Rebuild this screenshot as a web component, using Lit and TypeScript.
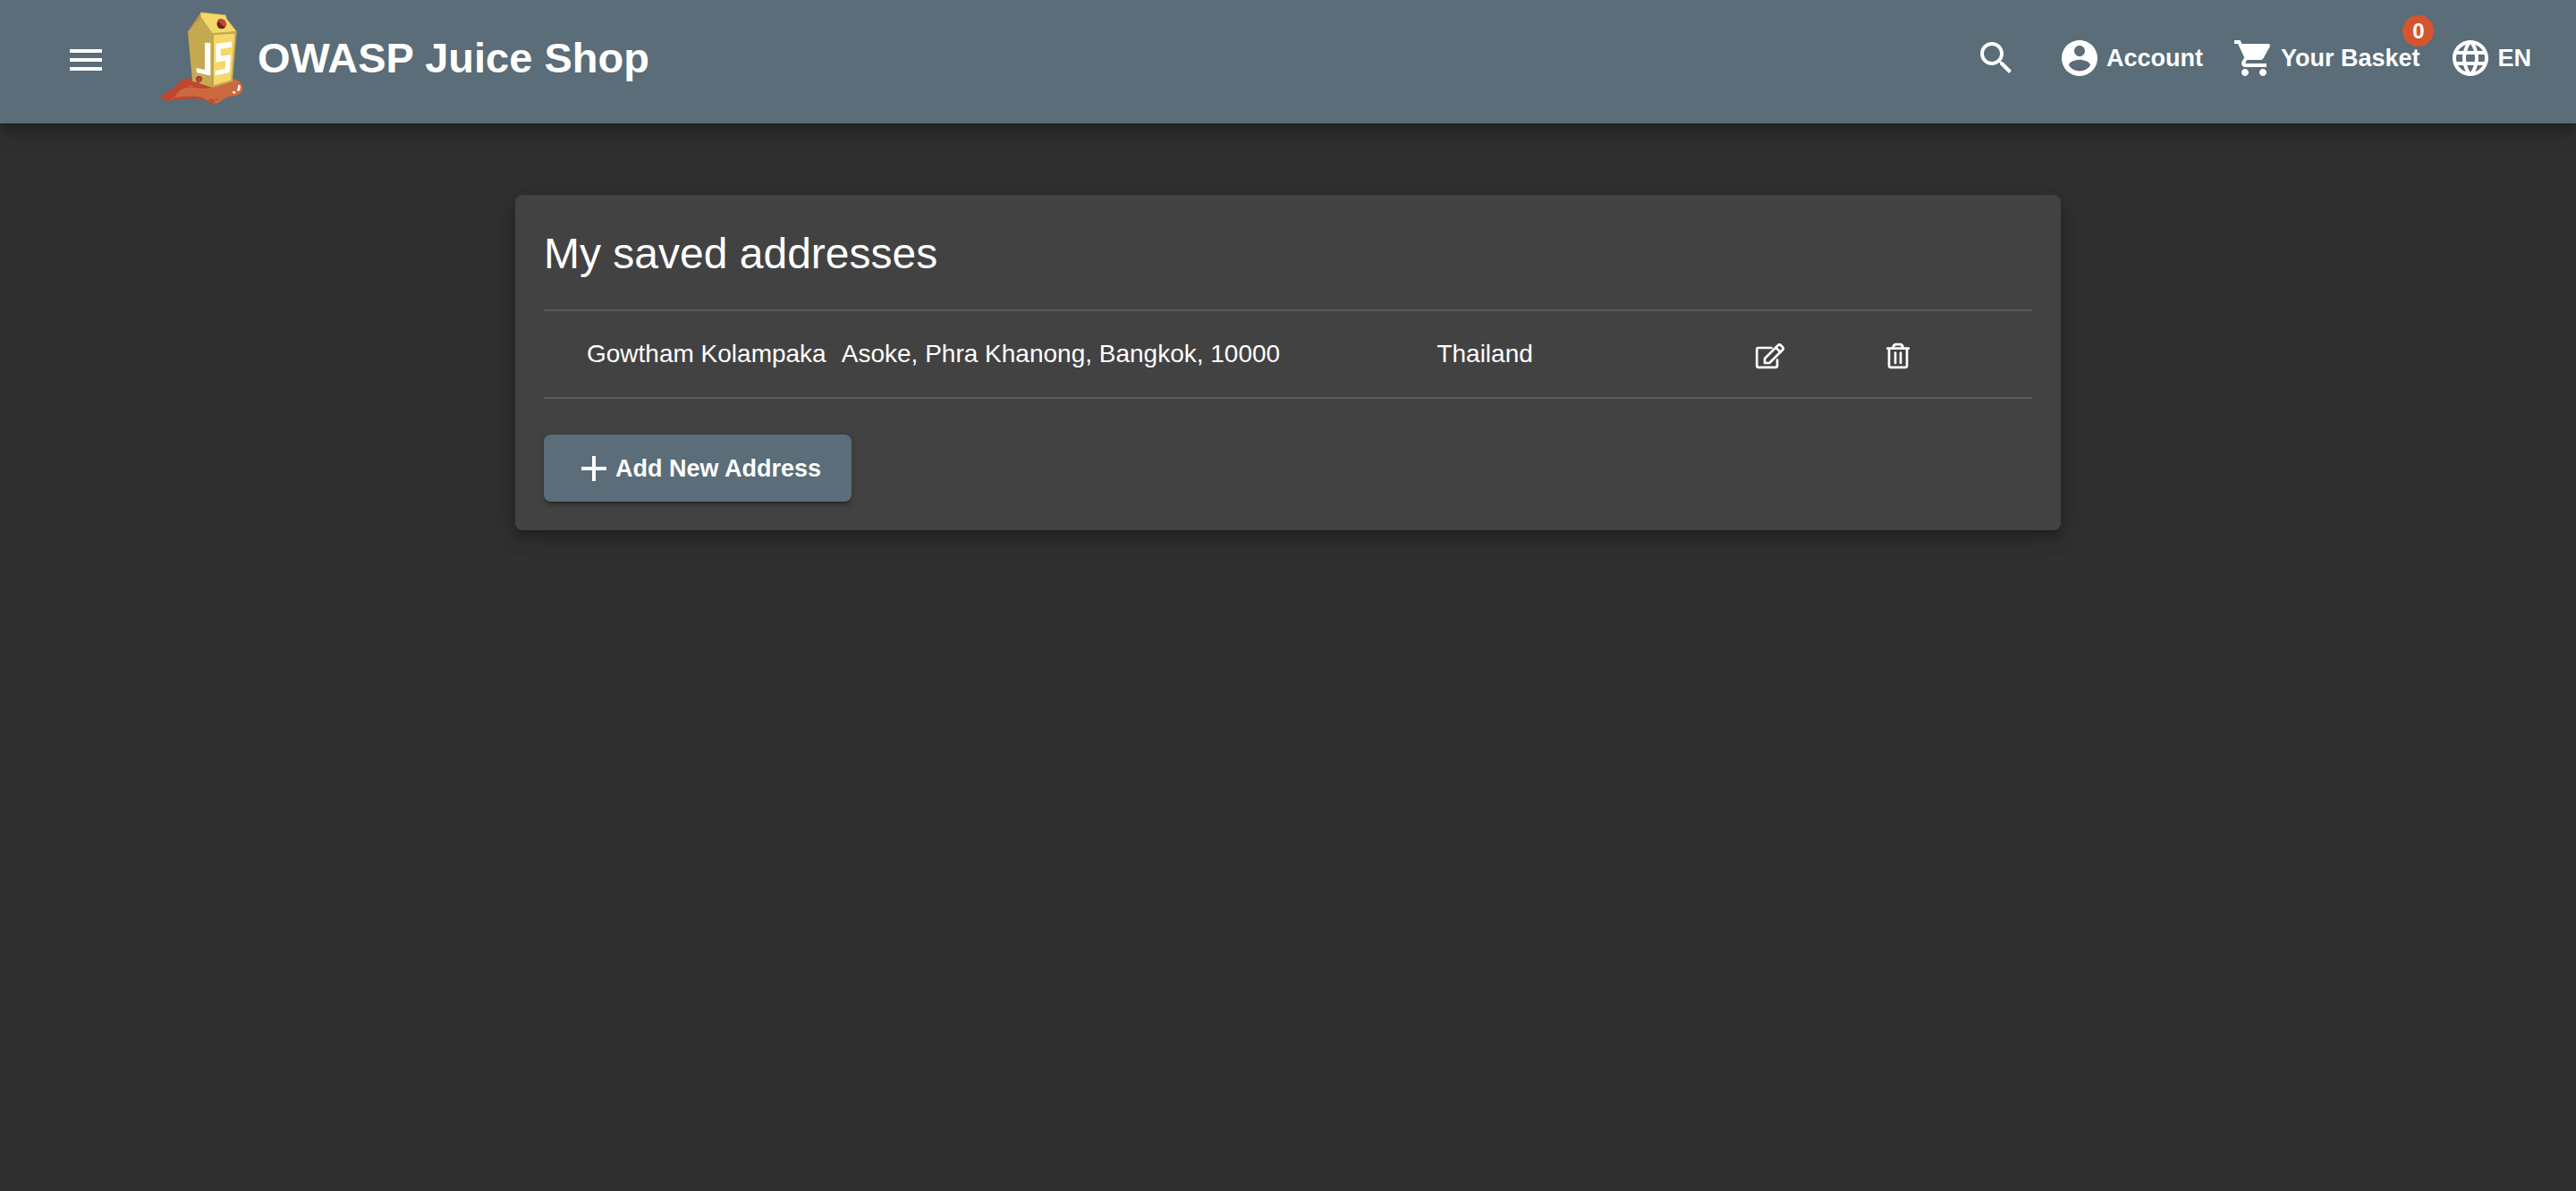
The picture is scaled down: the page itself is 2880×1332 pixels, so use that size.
import { LitElement, html, css, svg } from "lit";
import { customElement, property, state } from "lit/decorators.js";

interface Address {
  name: string;
  street: string;
  country: string;
}

const glyphs: Record<string, string> = {
  menu: "M3 18h18v-2H3v2zm0-5h18v-2H3v2zm0-7v2h18V6H3z",
  search:
    "M15.5 14h-.79l-.28-.27C15.41 12.59 16 11.11 16 9.5 16 5.91 13.09 3 9.5 3S3 5.91 3 9.5 5.91 16 9.5 16c1.61 0 3.09-.59 4.23-1.57l.27.28v.79l5 4.99L20.49 19l-4.99-5zm-6 0C7.01 14 5 11.99 5 9.5S7.01 5 9.5 5 14 7.01 14 9.5 11.99 14 9.5 14z",
  account:
    "M12 2C6.48 2 2 6.48 2 12s4.48 10 10 10 10-4.48 10-10S17.52 2 12 2zm0 3c1.66 0 3 1.34 3 3s-1.34 3-3 3-3-1.34-3-3 1.34-3 3-3zm0 14.2c-2.5 0-4.71-1.28-6-3.22.03-1.99 4-3.08 6-3.08 1.99 0 5.97 1.09 6 3.08-1.29 1.94-3.5 3.22-6 3.22z",
  cart: "M7 18c-1.1 0-1.99.9-1.99 2S5.9 22 7 22s2-.9 2-2-.9-2-2-2zM1 2v2h2l3.6 7.59-1.35 2.45c-.16.28-.25.61-.25.96 0 1.1.9 2 2 2h12v-2H7.42c-.14 0-.25-.11-.25-.25l.03-.12.9-1.63h7.45c.75 0 1.41-.41 1.75-1.03l3.58-6.49c.08-.14.12-.31.12-.48 0-.55-.45-1-1-1H5.21l-.94-2H1zm16 16c-1.1 0-1.99.9-1.99 2s.89 2 1.99 2 2-.9 2-2-.9-2-2-2z",
  globe:
    "M11.99 2C6.47 2 2 6.48 2 12s4.47 10 9.99 10C17.52 22 22 17.52 22 12S17.52 2 11.99 2zm6.93 6h-2.95c-.32-1.25-.78-2.45-1.38-3.56 1.84.63 3.37 1.91 4.33 3.56zM12 4.04c.83 1.2 1.48 2.53 1.91 3.96h-3.82c.43-1.43 1.08-2.76 1.91-3.96zM4.26 14C4.1 13.36 4 12.69 4 12s.1-1.36.26-2h3.38c-.08.66-.14 1.32-.14 2s.06 1.34.14 2H4.26zm.82 2h2.95c.32 1.25.78 2.45 1.38 3.56-1.84-.63-3.37-1.9-4.33-3.56zm2.95-8H5.08c.96-1.66 2.49-2.93 4.33-3.56C8.81 5.55 8.35 6.75 8.03 8zM12 19.96c-.83-1.2-1.48-2.53-1.91-3.96h3.82c-.43 1.43-1.08 2.76-1.91 3.96zM14.34 14H9.66c-.09-.66-.16-1.32-.16-2s.07-1.35.16-2h4.68c.09.65.16 1.32.16 2s-.07 1.34-.16 2zm.25 5.56c.6-1.11 1.06-2.31 1.38-3.56h2.95c-.96 1.65-2.49 2.93-4.33 3.56zM16.36 14c.08-.66.14-1.32.14-2s-.06-1.34-.14-2h3.38c.16.64.26 1.31.26 2s-.1 1.36-.26 2h-3.38z",
  add: "M19 13h-6v6h-2v-6H5v-2h6V5h2v6h6v2z",
};

const icon = (name: string) => html`
  <svg class="icon" viewBox="0 0 24 24" aria-hidden="true">${svg`<path fill="currentColor" d=${glyphs[name]} />`}</svg>
`;

const editIcon = html`
  <svg class="line-icon edit" viewBox="0 0 32 28" aria-hidden="true">
    <path d="M17.500 5H3Q1.200 5 1.200 7V25Q1.200 26.800 3 26.800H22Q24 26.800 24 25V18.500" />
    <path d="M10 22V17L24.600 2.400Q26.400.600 28.200 2.400L29.900 4.100Q31.400 5.800 29.700 7.500L15.200 22Z" />
    <path d="M22.500 4.800L27.400 9.700" />
  </svg>
`;

const trashIcon = html`
  <svg class="line-icon trash" viewBox="0 0 26 28" aria-hidden="true">
    <path d="M1.200 5.700H24.800M3 6V25Q3 26.800 5 26.800H21Q23 26.800 23 25V6" />
    <path d="M7.500 5Q7.800 1.200 11 1.200H15Q18.200 1.200 18.500 5" />
    <path d="M10 10.500V22M16 10.500V22" />
  </svg>
`;

const logo = html`
  <svg class="logo" viewBox="60 36 276 312" role="img" aria-label="Juice carton">
    <path fill="#bf4631" d="M60 323C62 313 72 309 84 305C104 297 111 276 132 265C145 258 160 258 175 259L300 262C322 266 336 280 334 296C332 312 318 318 302 319C281 320 270 330 255 341C244 348 228 346 218 339C205 330 190 326 164 328C130 330 94 337 72 334C64 332 60 328 60 323Z" />
    <path fill="#cd693e" d="M105 325C113 306 126 294 148 291C170 288 190 295 212 294C240 292 250 275 300 262C322 266 336 280 334 296C332 312 318 318 302 319C281 320 270 330 255 341C250 344 243 345 238 344C228 342 216 333 204 327C180 316 140 318 105 325Z" />
    <path fill="#bf4631" d="M219 330C225 326 236 330 241 336C240 343 227 343 219 330ZM239 330L252 328L249 333Z" />
    <path fill="#cd693e" d="M151 286Q162 281 171 286Q160 291 151 286ZM172 279Q179 275 185 279Q178 284 172 279Z" />
    <circle cx="99" cy="327" r="3" fill="#cd693e" />
    <path fill="#c5aa52" d="M150 103L194 54L233 110V291L165 269Z" />
    <path fill="#c39548" d="M152 100L194 38L196 58Z" />
    <path fill="#f5d868" d="M193 38L277 47L280 60L314 103L233 110L194 54Z" />
    <path fill="#c5aa52" d="M232 108L314 102L300 271L233 291Z" />
    <path fill="#f5d868" d="M237 115L307 110L294 266L237 283Z" />
    <path fill="none" stroke="#c5aa52" stroke-width="2" d="M194 39L277 48L280 60L313 103" />
    <path fill="#fff" d="M207 140L226 141V251L179 240V225L207 231Z" />
    <path fill="#fff" d="M244 144L297 137V155L260 161V185L294 181L290 240L242 250V235L275 228L277 200L244 206Z" />
    <path fill="#6b241c" d="M247 77L252 63Q262 58 273 65L280 78L274 91Q262 97 251 89Z" />
    <path fill="#c34732" d="M256 62Q267 59 275 67L280 78L274 88Q265 85 260 75Q255 71 250 68Z" />
    <path fill="#7d2c20" d="M177 263C177 249 197 248 198 262C198 270 192 273 187 274L186 281H173C180 277 182 274 177 263Z" />
    <path fill="#bf4631" d="M179 265C180 252 195 253 196 263C195 269 190 272 186 273C188 283 214 290 225 290L205 294L170 283C178 279 184 274 179 265Z" />
    <path fill="#fff" d="M318 283C325 279 328 287 326 295C324 303 318 305 315 301C315 295 320 292 318 283Z" />
    <ellipse cx="305" cy="307" rx="5" ry="4" fill="#fff" />
  </svg>
`;

const shared = css`
  :host {
    font-family: "Helvetica Neue", "Liberation Sans", Arial, sans-serif;
    color: #fff;
  }
  button {
    font: inherit;
    color: inherit;
    background: none;
    border: 0;
    margin: 0;
    padding: 0;
    cursor: pointer;
  }
  .icon {
    display: block;
    flex: none;
    width: 48px;
    height: 48px;
  }
`;

@customElement("shop-toolbar")
class ShopToolbar extends LitElement {
  @property({ type: Number }) basketCount = 0;

  static styles = [
    shared,
    css`
      :host {
        display: block;
        position: relative;
      }
      .bar {
        display: flex;
        align-items: center;
        box-sizing: border-box;
        min-height: 138px;
        padding: 12px 50px 20px 72px;
        background: #5a6d78;
        box-shadow: 0 6px 10px -2px rgba(0, 0, 0, 0.2), 0 12px 20px rgba(0, 0, 0, 0.14),
          0 2px 36px rgba(0, 0, 0, 0.12);
      }
      .menu {
        padding-top: 4px;
      }
      .brand {
        display: flex;
        align-items: center;
        gap: 16px;
        margin-left: 60px;
        color: inherit;
        text-decoration: none;
        font-size: 47px;
        line-height: 56px;
        font-weight: 700;
        white-space: nowrap;
      }
      .logo {
        display: block;
        width: 92px;
        height: 104px;
      }
      .actions {
        display: flex;
        align-items: center;
        gap: 33px;
        margin-left: auto;
      }
      .action {
        display: flex;
        align-items: center;
        gap: 6px;
        font-size: 27px;
        line-height: 32px;
        font-weight: 700;
        white-space: nowrap;
      }
      .search {
        margin-right: 12px;
      }
      .basket-label {
        position: relative;
      }
      .badge {
        position: absolute;
        right: -16px;
        bottom: 29px;
        width: 35px;
        height: 35px;
        border-radius: 50%;
        background: #d5552e;
        font-size: 24px;
        line-height: 35px;
        text-align: center;
      }
    `,
  ];

  render() {
    return html`
      <header class="bar">
        <button class="menu" aria-label="Open menu">${icon("menu")}</button>
        <a class="brand" href="#/search">${logo}<span>OWASP Juice Shop</span></a>
        <nav class="actions">
          <button class="search" aria-label="Search">${icon("search")}</button>
          <button class="action">${icon("account")}<span>Account</span></button>
          <button class="action">
            ${icon("cart")}<span class="basket-label"
              >Your Basket<span class="badge">${this.basketCount}</span></span
            >
          </button>
          <button class="action">${icon("globe")}<span>EN</span></button>
        </nav>
      </header>
    `;
  }
}

@customElement("address-card")
class AddressCard extends LitElement {
  @property({ attribute: false }) addresses: Address[] = [];

  static styles = [
    shared,
    css`
      :host {
        display: block;
      }
      .card {
        box-sizing: border-box;
        padding: 32px;
        border-radius: 8px;
        background: #424242;
        box-shadow: 0 6px 10px -2px rgba(0, 0, 0, 0.2), 0 12px 20px rgba(0, 0, 0, 0.14),
          0 2px 36px rgba(0, 0, 0, 0.12);
      }
      .title {
        margin: 0 0 28px;
        font-size: 48px;
        line-height: 68px;
        font-weight: 400;
      }
      .table {
        width: 100%;
        table-layout: fixed;
        border-collapse: separate;
        border-spacing: 0;
        border-top: 2px solid #595959;
        font-size: 28px;
        line-height: 32px;
      }
      .cell {
        height: 96px;
        padding: 0;
        border-bottom: 2px solid #595959;
        white-space: nowrap;
      }
      .name {
        width: 20%;
        box-sizing: border-box;
        padding-left: 48px;
      }
      .street {
        width: 40%;
      }
      .country {
        width: 20%;
      }
      .edit-cell {
        width: 146px;
      }
      .tool {
        display: block;
        padding: 12px 24px 8px;
      }
      .line-icon {
        display: block;
        height: 28px;
        fill: none;
        stroke: currentColor;
        stroke-width: 2.7;
        stroke-linejoin: round;
        stroke-linecap: round;
        overflow: visible;
      }
      .edit {
        width: 32px;
      }
      .trash {
        width: 26px;
      }
      .add {
        display: flex;
        align-items: center;
        min-height: 75px;
        margin-top: 40px;
        padding: 0 34px 0 32px;
        border-radius: 8px;
        background: #5a6d78;
        box-shadow: 0 6px 2px -4px rgba(0, 0, 0, 0.2), 0 4px 4px rgba(0, 0, 0, 0.14),
          0 2px 10px rgba(0, 0, 0, 0.12);
        font-size: 27px;
        line-height: 32px;
        font-weight: 700;
      }
    `,
  ];

  render() {
    return html`
      <section class="card">
        <h1 class="title">My saved addresses</h1>
        <table class="table" aria-label="My saved addresses">
          <tbody>
            ${this.addresses.map(
              (a) => html`
                <tr>
                  <td class="cell name">${a.name}</td>
                  <td class="cell street">${a.street}</td>
                  <td class="cell country">${a.country}</td>
                  <td class="cell edit-cell">
                    <button class="tool" aria-label="Edit address">${editIcon}</button>
                  </td>
                  <td class="cell">
                    <button class="tool" aria-label="Delete address">${trashIcon}</button>
                  </td>
                </tr>
              `
            )}
          </tbody>
        </table>
        <button class="add">${icon("add")}<span>Add New Address</span></button>
      </section>
    `;
  }
}

@customElement("app-root")
class AppRoot extends LitElement {
  @state() private addresses: Address[] = [
    {
      name: "Gowtham Kolampaka",
      street: "Asoke, Phra Khanong, Bangkok, 10000",
      country: "Thailand",
    },
  ];

  static styles = css`
    :host {
      display: block;
      min-height: 100vh;
      background: #303030;
    }
    .content {
      width: 60%;
      margin: 0 auto;
      padding: 80px 0;
    }
  `;

  render() {
    return html`
      <shop-toolbar .basketCount=${0}></shop-toolbar>
      <main class="content">
        <address-card .addresses=${this.addresses}></address-card>
      </main>
    `;
  }
}
